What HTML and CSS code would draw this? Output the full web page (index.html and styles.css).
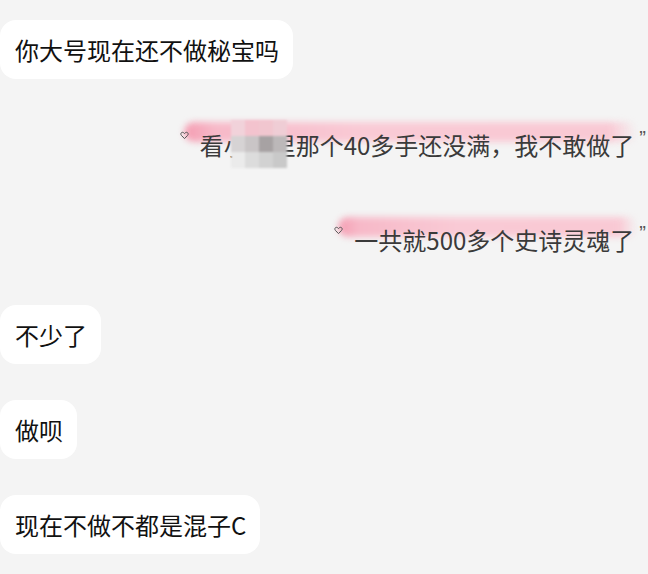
FILE: index.html
```html
<!DOCTYPE html>
<html>
<head>
  <meta charset="UTF-8">
  <title>聊天记录</title>
  <link rel="stylesheet" href="styles.css">
</head>
<body>
  <div id="chat">
    <div class="row left">
      <div class="bubble">你大号现在还不做秘宝吗</div>
    </div>

    <div class="row right">
      <div class="quote-msg">
        <span class="heart"><svg width="9" height="9" viewBox="0 0 9 9"><path d="M4.5 7.6 L1.4 4.4 C0.3 3.3 0.9 1.3 2.5 1.3 C3.4 1.3 4 1.9 4.5 2.6 C5 1.9 5.6 1.3 6.5 1.3 C8.1 1.3 8.7 3.3 7.6 4.4 Z" fill="none" stroke="#555" stroke-width="1"/></svg></span>
        <span class="hl-text">看小号里那个40多手还没满，我不敢做了
          <span class="mosaic">
            <i style="background:#f1d2da"></i><i style="background:#f3c3ce"></i><i style="background:#f1c6cf"></i><i style="background:#efcdd5"></i>
            <i style="background:#d6d3d4"></i><i style="background:#c9c5c6"></i><i style="background:#a7a2a3"></i><i style="background:#bcb8b9"></i>
            <i style="background:#ebebeb"></i><i style="background:#dcdcdc"></i><i style="background:#d2d2d2"></i><i style="background:#c9c9c9"></i>
          </span>
        </span>
        <span class="qmark">”</span>
      </div>
    </div>

    <div class="row right">
      <div class="quote-msg">
        <span class="heart"><svg width="9" height="9" viewBox="0 0 9 9"><path d="M4.5 7.6 L1.4 4.4 C0.3 3.3 0.9 1.3 2.5 1.3 C3.4 1.3 4 1.9 4.5 2.6 C5 1.9 5.6 1.3 6.5 1.3 C8.1 1.3 8.7 3.3 7.6 4.4 Z" fill="none" stroke="#555" stroke-width="1"/></svg></span>
        <span class="hl-text">一共就500多个史诗灵魂了</span>
        <span class="qmark">”</span>
      </div>
    </div>

    <div class="row left">
      <div class="bubble">不少了</div>
    </div>

    <div class="row left">
      <div class="bubble">做呗</div>
    </div>

    <div class="row left">
      <div class="bubble">现在不做不都是混子C</div>
    </div>
  </div>
</body>
</html>
```

FILE: styles.css
```css
body {
  margin: 0;
  background: #f4f4f4;
  font-family: "Noto Sans CJK SC", "Noto Sans", sans-serif;
}

#chat {
  display: flex;
  flex-direction: column;
  gap: 36px;
  padding: 20px 2px 0 0;
}

.row {
  display: flex;
  height: 59px;
}

.row.left {
  justify-content: flex-start;
}

.row.right {
  justify-content: flex-end;
}

.bubble {
  background: #fff;
  border-radius: 16px;
  padding: 14px 14px 14px 15px;
  font-size: 24px;
  line-height: 31px;
  color: #111;
  white-space: nowrap;
}

.quote-msg {
  display: flex;
  align-items: flex-start;
  padding-top: 14px;
  font-size: 24px;
  line-height: 31px;
  color: #3a3a3a;
  white-space: nowrap;
}

.hl-text {
  position: relative;
  z-index: 0;
}

.hl-text::before {
  content: "";
  position: absolute;
  z-index: -1;
  left: -16px;
  right: -3px;
  top: -7px;
  height: 20px;
  border-radius: 10px;
  background: linear-gradient(to right, #f49db2 0%, #f7b9c8 7%, #f9cad5 40%, #f9c9d4 94%, rgba(249, 203, 213, 0) 100%);
  filter: blur(3px);
}

.heart {
  position: relative;
  z-index: 1;
  width: 9px;
  height: 9px;
  margin-right: 11px;
  margin-top: 2px;
}

.heart svg {
  display: block;
}

.qmark {
  font-family: "Liberation Sans", sans-serif;
  font-size: 20px;
  line-height: 20px;
  color: #555;
  margin-left: 5px;
  margin-top: -1px;
}

.mosaic {
  position: absolute;
  left: 31px;
  top: -9px;
  width: 56px;
  height: 48px;
  display: grid;
  grid-template-columns: repeat(4, 1fr);
  grid-template-rows: repeat(3, 1fr);
  filter: blur(1px);
}

.mosaic i {
  display: block;
}
```
